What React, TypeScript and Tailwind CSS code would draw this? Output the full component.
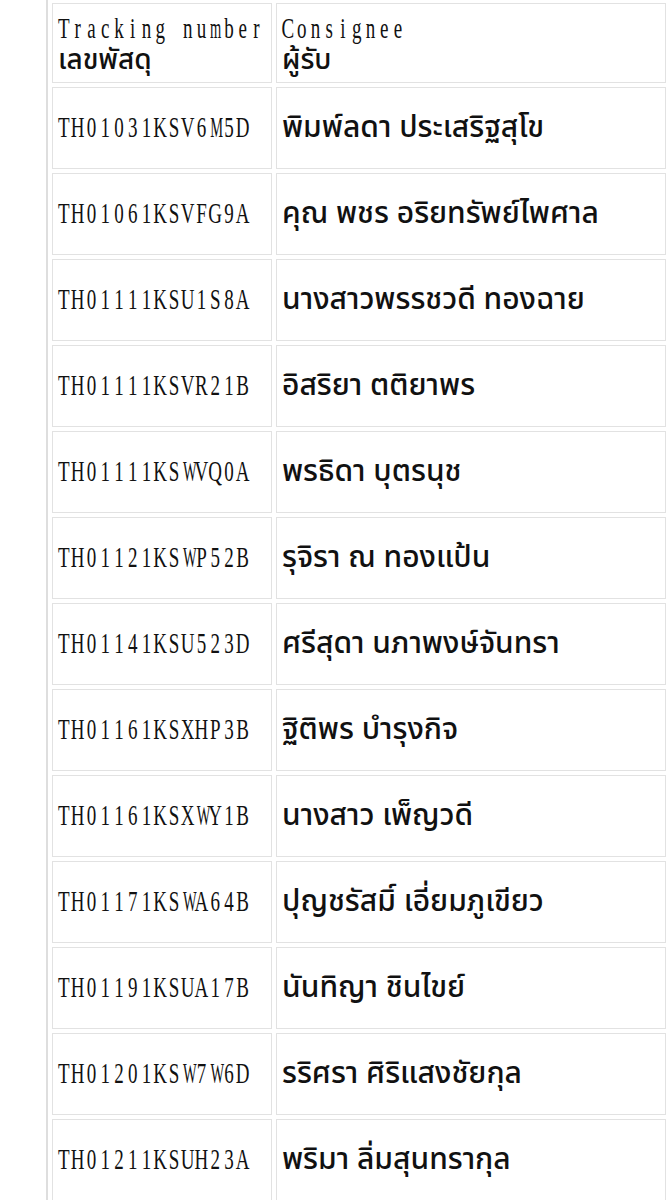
import React from "react";

const ROWS: [string, string][] = [
  ["TH01031KSV6M5D", "พิมพ์ลดา ประเสริฐสุโข"],
  ["TH01061KSVFG9A", "คุณ พชร อริยทรัพย์ไพศาล"],
  ["TH01111KSU1S8A", "นางสาวพรรชวดี ทองฉาย"],
  ["TH01111KSVR21B", "อิสริยา ตติยาพร"],
  ["TH01111KSWVQ0A", "พรธิดา บุตรนุช"],
  ["TH01121KSWP52B", "รุจิรา ณ ทองแป้น"],
  ["TH01141KSU523D", "ศรีสุดา นภาพงษ์จันทรา"],
  ["TH01161KSXHP3B", "ฐิติพร บำรุงกิจ"],
  ["TH01161KSXWY1B", "นางสาว เพ็ญวดี"],
  ["TH01171KSWA64B", "ปุญชรัสมิ์ เอี่ยมภูเขียว"],
  ["TH01191KSUA17B", "นันทิญา ชินไขย์"],
  ["TH01201KSW7W6D", "รริศรา ศิริแสงชัยกุล"],
  ["TH01211KSUH23A", "พริมา ลิ่มสุนทรากุล"],
];

const WIDE = "MWmw";

const thai = "font-['Noto_Sans_Thai','Noto_Sans','DejaVu_Sans',sans-serif] whitespace-nowrap";
const cell = "border border-[#e2e2e2] px-[5px] align-middle text-[#111]";

// serif text laid on a fixed pitch, squeezed horizontally like a half-width font
function Mono({ text }: { text: string }) {
  return (
    <span className="inline-block origin-left scale-x-[0.655] whitespace-nowrap font-['Liberation_Serif',serif] text-[29px] -ml-[1px]">
      {text.split("").map((ch, i) => (
        <span key={i} className="inline-block w-[21px] text-center">
          {ch === " " ? (
            "\u00a0"
          ) : WIDE.includes(ch) ? (
            <span className="inline-block scale-x-[0.76]">{ch}</span>
          ) : (
            ch
          )}
        </span>
      ))}
    </span>
  );
}

function HeadCell({ en, th }: { en: string; th: string }) {
  return (
    <th className={`${cell} h-[80px] pt-[2px] text-left font-normal leading-[29px]`}>
      <div className="h-[32px]">
        <Mono text={en} />
      </div>
      <div className={`${thai} text-[28px] font-medium`}>{th}</div>
    </th>
  );
}

export default function App() {
  return (
    <div className="w-full h-[1200px] overflow-hidden bg-white">
      <table className="ml-[46px] -mt-[3px] w-[626px] table-fixed border-separate border-spacing-[4px] border-2 border-[#dedede]">
        <colgroup>
          <col className="w-[220px]" />
          <col className="w-[390px]" />
        </colgroup>
        <thead>
          <tr>
            <HeadCell en="Tracking number" th="เลขพัสดุ" />
            <HeadCell en="Consignee" th="ผู้รับ" />
          </tr>
        </thead>
        <tbody>
          {ROWS.map(([code, name]) => (
            <tr key={code}>
              <td className={`${cell} h-[82px]`}>
                <Mono text={code} />
              </td>
              <td className={`${cell} h-[82px]`}>
                <span className={`${thai} text-[30px] font-medium`}>{name}</span>
              </td>
            </tr>
          ))}
        </tbody>
      </table>
    </div>
  );
}
